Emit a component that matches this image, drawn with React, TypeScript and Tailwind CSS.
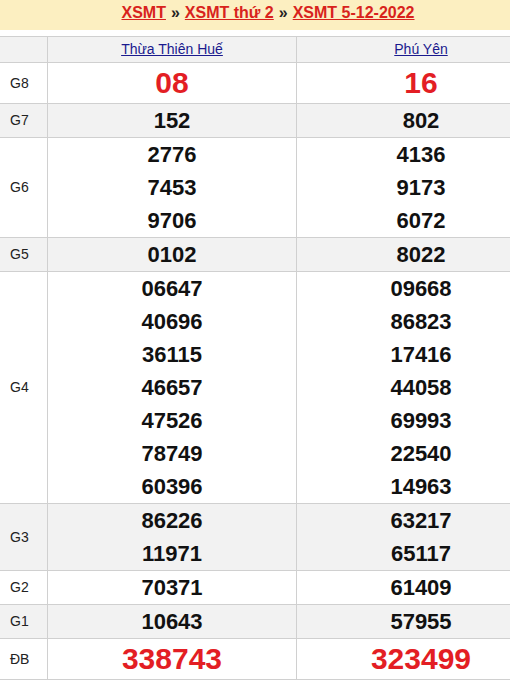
import React from "react";

type Row = { label: string; a: string[]; b: string[]; big?: boolean; gray?: boolean };

const ROWS: Row[] = [
  { label: "G8", a: ["08"], b: ["16"], big: true },
  { label: "G7", a: ["152"], b: ["802"], gray: true },
  { label: "G6", a: ["2776", "7453", "9706"], b: ["4136", "9173", "6072"] },
  { label: "G5", a: ["0102"], b: ["8022"], gray: true },
  {
    label: "G4",
    a: ["06647", "40696", "36115", "46657", "47526", "78749", "60396"],
    b: ["09668", "86823", "17416", "44058", "69993", "22540", "14963"],
  },
  { label: "G3", a: ["86226", "11971"], b: ["63217", "65117"], gray: true },
  { label: "G2", a: ["70371"], b: ["61409"] },
  { label: "G1", a: ["10643"], b: ["57955"], gray: true },
  { label: "ĐB", a: ["338743"], b: ["323499"], big: true },
];

function Cell({ nums, big }: { nums: string[]; big?: boolean }) {
  return (
    <div className="w-[249px] shrink-0 border-r border-[#d0d0d0] flex flex-col items-center justify-center">
      {nums.map((n) =>
        big ? (
          <div key={n} className="h-[40px] leading-[40px] text-[30px] font-bold text-[#e31e24]">
            {n}
          </div>
        ) : (
          <div key={n} className="h-[33px] leading-[33px] text-[22px] font-bold text-[#111]">
            {n}
          </div>
        ),
      )}
    </div>
  );
}

export default function App() {
  return (
    <div
      className="w-[510px] h-[680px] overflow-hidden bg-white"
      style={{ fontFamily: '"Liberation Sans", Arial, sans-serif' }}
    >
      <div className="h-[30px] bg-[#fcefc1] flex justify-center pl-[26px] pt-[3px] text-[16px] font-bold leading-[19px]">
        <a href="#" className="text-[#d8231c] underline">XSMT</a>
        <span className="text-[#222] mx-[5px]">»</span>
        <a href="#" className="text-[#d8231c] underline">XSMT thứ 2</a>
        <span className="text-[#222] mx-[5px]">»</span>
        <a href="#" className="text-[#d8231c] underline">XSMT 5-12-2022</a>
      </div>

      <div className="mt-[6px] w-[546px] border-t border-[#d0d0d0]">
        <div className="flex h-[26px] bg-[#f2f2f2] border-b border-[#d0d0d0]">
          <div className="w-[48px] shrink-0 border-r border-[#d0d0d0]" />
          <div className="w-[249px] shrink-0 border-r border-[#d0d0d0] flex items-center justify-center">
            <a href="#" className="text-[14px] text-[#1a1a8e] underline">Thừa Thiên Huế</a>
          </div>
          <div className="w-[249px] shrink-0 border-r border-[#d0d0d0] flex items-center justify-center">
            <a href="#" className="text-[14px] text-[#1a1a8e] underline">Phú Yên</a>
          </div>
        </div>
        {ROWS.map((r) => (
          <div
            key={r.label}
            className={`flex border-b border-[#d0d0d0] ${r.gray ? "bg-[#f2f2f2]" : "bg-white"}`}
          >
            <div className="w-[48px] shrink-0 border-r border-[#d0d0d0] flex items-center pl-[10px] text-[14px] text-[#222]">
              {r.label}
            </div>
            <Cell nums={r.a} big={r.big} />
            <Cell nums={r.b} big={r.big} />
          </div>
        ))}
      </div>
    </div>
  );
}
